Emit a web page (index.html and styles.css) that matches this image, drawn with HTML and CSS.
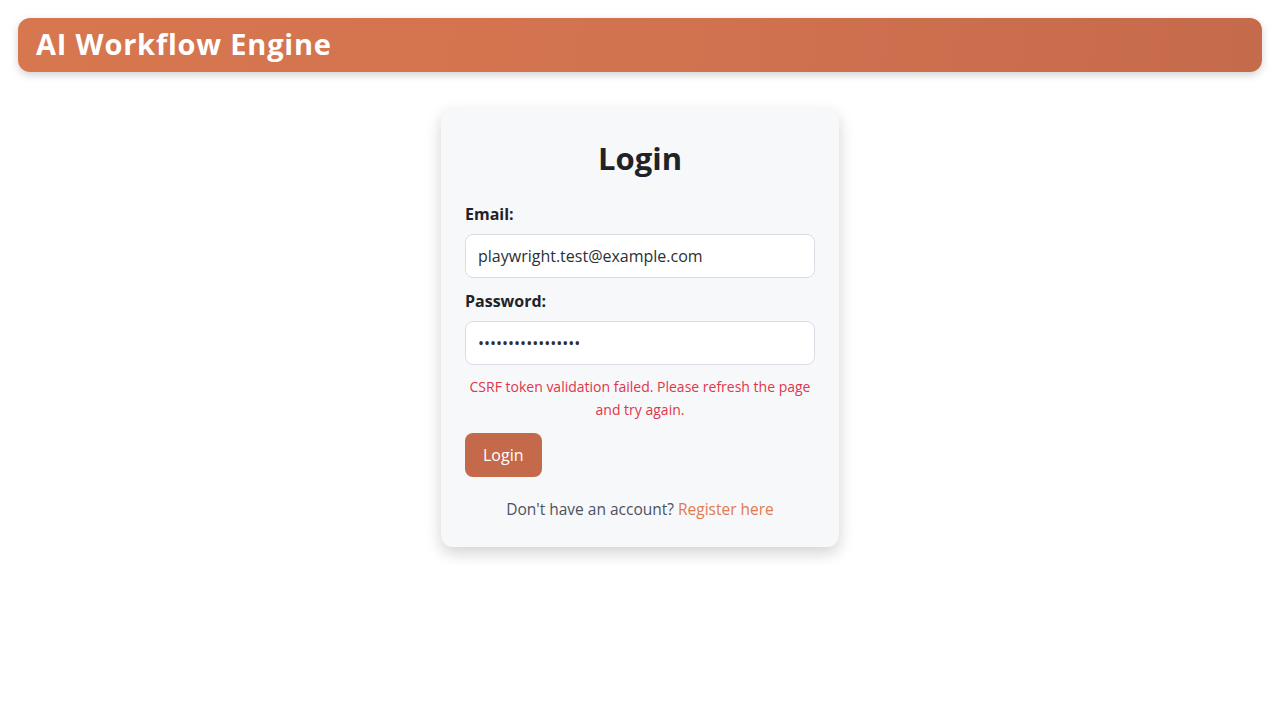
FILE: index.html
```html
<!DOCTYPE html>
<html lang="en">
<head>
<meta charset="utf-8">
<title>AI Workflow Engine - Login</title>
<link rel="stylesheet" href="styles.css">
</head>
<body>
<header class="app-header">
  <h1 class="app-title">AI Workflow Engine</h1>
</header>
<main class="main">
  <section class="card">
    <h2 class="card-title">Login</h2>
    <form class="form">
      <div class="field">
        <label class="label" for="email">Email:</label>
        <input class="input" id="email" type="email" value="playwright.test@example.com">
      </div>
      <div class="field field-last">
        <label class="label" for="password">Password:</label>
        <input class="input" id="password" type="password" value="playwrighttest123">
      </div>
      <p class="error">CSRF token validation failed. Please refresh the page and try again.</p>
      <div class="actions">
        <button type="button" class="btn">Login</button>
      </div>
    </form>
    <p class="footer-text">Don't have an account? <a class="link" href="#">Register here</a></p>
  </section>
</main>
</body>
</html>
```

FILE: styles.css
```css
* { box-sizing: border-box; }
html, body { margin: 0; padding: 0; background: #ffffff; }
body {
  font-family: "Open Sans", "Noto Sans", "Liberation Sans", sans-serif;
  color: #1f2328;
  padding: 18px;
}
.app-header {
  height: 54px;
  border-radius: 12px;
  background: linear-gradient(100deg, #d7774f 0%, #d27350 50%, #c56a4b 100%);
  box-shadow: 0 3px 8px rgba(0,0,0,0.18);
  display: flex;
  align-items: center;
  padding: 0 18px 4px;
}
.app-title {
  margin: 0;
  color: #ffffff;
  font-size: 29px;
  font-weight: 700;
  letter-spacing: 0.8px;
}
.main {
  display: flex;
  justify-content: center;
  padding-top: 37px;
}
.card {
  width: 398px;
  background: #f7f8fa;
  border-radius: 12px;
  box-shadow: 0 6px 16px rgba(0,0,0,0.18);
  padding: 26px 24px 27px;
}
.card-title {
  margin: 0 0 22px;
  text-align: center;
  font-size: 31px;
  font-weight: 700;
  line-height: 46px;
  color: #1f2328;
}
.form { display: flex; flex-direction: column; }
.field { display: flex; flex-direction: column; margin-bottom: 12px; }
.field-last { margin-bottom: 0; }
.label {
  font-size: 16px;
  font-weight: 700;
  line-height: 22px;
  margin-bottom: 9px;
  color: #1f2328;
}
.input {
  height: 44px;
  border: 1px solid #d9dde3;
  border-radius: 8px;
  background: #ffffff;
  padding: 0 12px;
  font-family: inherit;
  font-size: 16px;
  color: #2b2f36;
}
.error {
  margin: 10px 0 12px;
  text-align: center;
  color: #e0364a;
  font-size: 14px;
  line-height: 23px;
}
.actions { display: flex; }
.btn {
  height: 44px;
  padding: 0 18px;
  border: none;
  border-radius: 8px;
  background: #c4694a;
  color: #ffffff;
  font-family: inherit;
  font-size: 16px;
}
.footer-text {
  margin: 21px 0 0;
  text-align: center;
  font-size: 15.5px;
  line-height: 22px;
  color: #4a5260;
}
.link { color: #e07a50; text-decoration: none; font-weight: 500; }
```
